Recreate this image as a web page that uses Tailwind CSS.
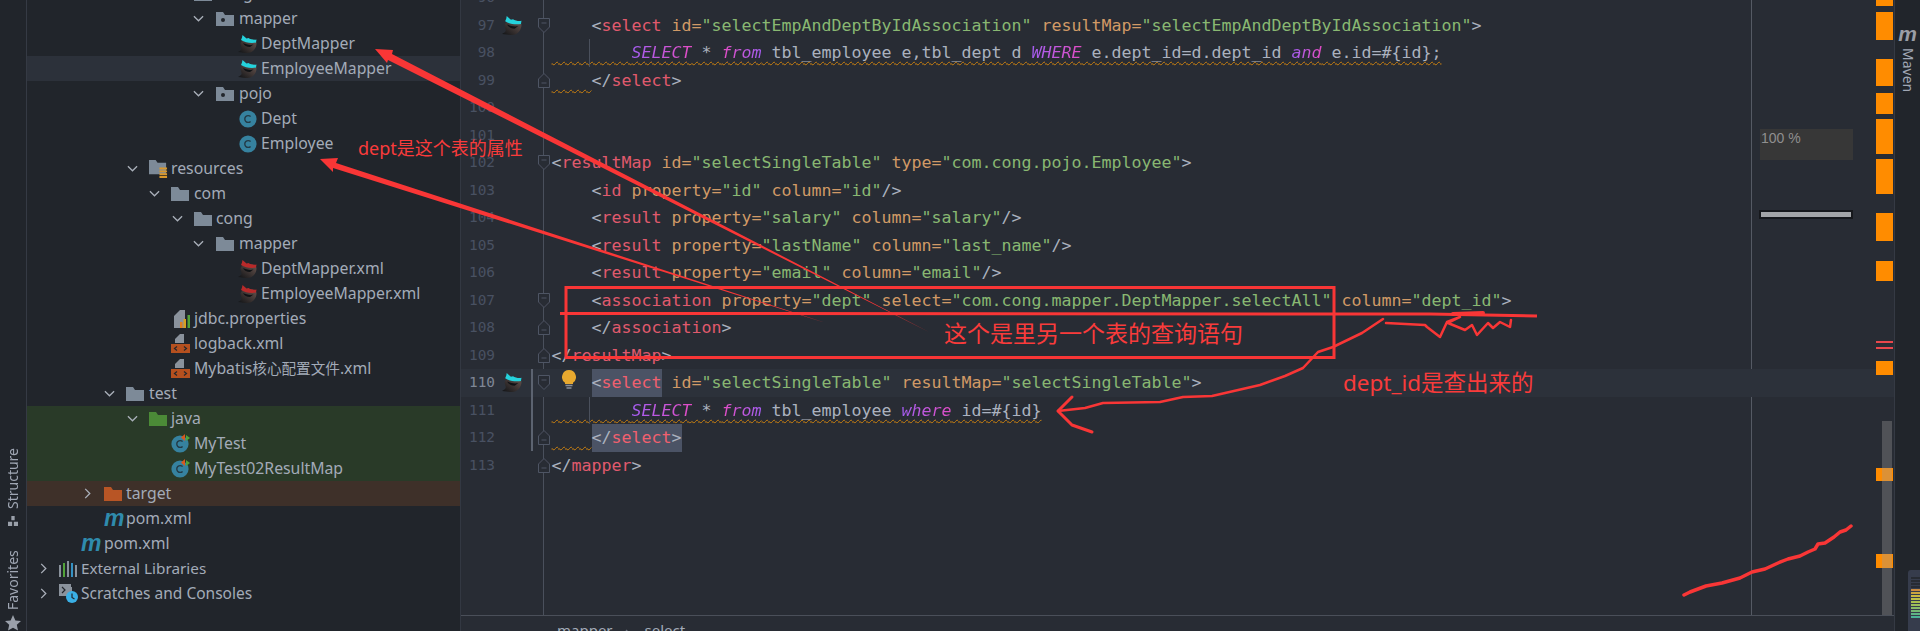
<!DOCTYPE html>
<html lang="zh">
  <head>
    <meta charset="UTF-8" />
    <meta name="viewport" content="width=device-width, initial-scale=1.0" />
    <script src="https://cdn.jsdelivr.net/npm/@tailwindcss/browser@4"></script>
    <title>IDE</title>
  </head>
  <body class="bg-[#282c34]">
    <!-- shared icons -->
    <svg class="absolute w-0 h-0">
      <defs>
        <linearGradient id="bird-body" x1="1" y1="0" x2="0" y2="1"><stop offset="0" stop-color="#6a5650" /><stop offset="1" stop-color="#0f1215" /></linearGradient>
      </defs>
      <symbol id="chev-down" viewBox="0 0 12 12"><path d="M1 3.500 6 8.500 11 3.500" fill="none" stroke="#aab0ba" stroke-width="1.400" /></symbol>
      <symbol id="chev-right" viewBox="0 0 12 12"><path d="M3.500 1 8.500 6 3.500 11" fill="none" stroke="#aab0ba" stroke-width="1.400" /></symbol>
      <symbol id="folder" viewBox="0 0 18 16"><path d="M0 1h7l2 3h9v11H0z" fill="#7d8a98" /></symbol>
      <symbol id="package" viewBox="0 0 18 16"><path d="M0 1h7l2 3h9v11H0z" fill="#7d8a98" /><circle cx="7" cy="9" r="2" fill="#22262c" /></symbol>
      <symbol id="resources" viewBox="0 0 20 20"><path d="M0 1h7l2 3h9v12H0z" fill="#7d8a98" /><path d="M11 9h8v2h-8zM11 12h8v2h-8zM11 15h8v2h-8zM11 18h8v2h-8z" fill="#d9982b" /></symbol>
      <symbol id="java-folder" viewBox="0 0 18 16"><path d="M0 1h7l2 3h9v11H0z" fill="#4b8a37" /></symbol>
      <symbol id="target-folder" viewBox="0 0 18 16"><path d="M0 1h7l2 3h9v11H0z" fill="#b85525" /></symbol>
      <symbol id="cls" viewBox="0 0 18 18"><circle cx="9" cy="9" r="8.600" fill="#36829f" /><path d="M11.600 6.600A3.400 3.400 0 1 0 11.600 11.400" fill="none" stroke="#233a46" stroke-width="1.400" /></symbol>
      <symbol id="test-cls" viewBox="0 0 19 19"><circle cx="9" cy="10" r="8.600" fill="#36829f" /><path d="M11.600 7.600A3.400 3.400 0 1 0 11.600 12.400" fill="none" stroke="#233a46" stroke-width="1.400" /><path d="M14 0 10 3.500 14 7z" fill="#d9591e" /><path d="M15 1 19 4 15 7z" fill="#52a339" /></symbol>
      <symbol id="bird-blue" viewBox="0 0 19 18"><path d="M2.500 9C3 5.500 6 4 10 4s8.500 1 8.500 4.500C18.500 13.500 14.500 18 9.500 18c-3 0-6-.5-9.500-1 2.500-1 4-2.500 3.500-4z" fill="url(#bird-body)" /><path d="M3 5c4 2.500 10 3.500 15 2.500l.5-3c-3 .5-6 0-8-1.500L8.500 3.500 4.500 0 4 2.500z" fill="#25d2dc" /><path d="M5 8c3 1.500 7 2.500 10.500 1.500L12 12c-3 0-6-1.500-7-4z" fill="#0f1215" /></symbol>
      <symbol id="bird-red" viewBox="0 0 19 18"><path d="M2.500 9C3 5.500 6 4 10 4s8.500 1 8.500 4.500C18.500 13.500 14.500 18 9.500 18c-3 0-6-.5-9.500-1 2.500-1 4-2.500 3.500-4z" fill="url(#bird-body)" /><path d="M3 5c4 2.500 10 3.500 15 2.500l.5-3c-3 .5-6 0-8-1.500L8.500 3.500 4.500 0 4 2.500z" fill="#b82a2a" /><path d="M5 8c3 1.500 7 2.500 10.500 1.500L12 12c-3 0-6-1.500-7-4z" fill="#0f1215" /></symbol>
      <symbol id="xml" viewBox="0 0 19 19"><path d="M4 9V5l5-5h4v9z" fill="#8a929c" /><path d="M0 10h19v9H0z" fill="#b5501f" /><path d="M6 12.500 3.500 14.500 6 16.500M13 12.500 15.500 14.500 13 16.500" fill="none" stroke="#22262c" stroke-width="1.200" /></symbol>
      <symbol id="props" viewBox="0 0 17 18"><path d="M0 18V6l6-6h5v18z" fill="#8a929c" /><path d="M6 12h2.500v6H6z" fill="#e0801f" /><path d="M9.500 9H12v9H9.500z" fill="#d9a020" /><path d="M13.500 5H16v13h-2.500z" fill="#52a339" /></symbol>
      <symbol id="fold-open" viewBox="0 0 12 15"><path d="M.5.5h11v8.500L6 14.500.5 9z" fill="#282c34" stroke="#4e5564" /><path d="M3.500 5h5" stroke="#4e5564" /></symbol>
      <symbol id="fold-close" viewBox="0 0 12 15"><path d="M.5 14.500h11V6L6 .5.5 6z" fill="#282c34" stroke="#4e5564" /><path d="M3.500 10h5" stroke="#4e5564" /></symbol>
    </svg>

    <div class="relative w-[1920px] h-[631px] overflow-hidden flex font-['Noto_Sans',sans-serif]">
      <!-- left tool stripe -->
      <div class="w-[27px] shrink-0 bg-[#21252b] border-r border-[#353a44] flex flex-col items-center pt-[451px] text-[14px] leading-none text-[#a0a7b4]">
        <span class="[writing-mode:vertical-rl] rotate-180 h-[58px] text-center">Structure</span>
        <svg class="w-[12px] h-[12px] mt-[7px] mb-[28px]" viewBox="0 0 12 12"><path d="M4 0h4v5H4zM0 7h5v5H0zM7 7h5v5H7z" fill="#9aa0aa" /></svg>
        <span class="[writing-mode:vertical-rl] rotate-180 h-[56px] text-center">Favorites</span>
        <svg class="w-[16px] h-[16px] mt-[5px] shrink-0" viewBox="0 0 16 16"><path d="M8 0l2.400 5.400 5.600.6-4.200 3.800 1.200 5.800L8 12.700 3 15.600l1.200-5.800L0 6l5.600-.6z" fill="#9aa0aa" /></svg>
      </div>

      <!-- project tree -->
      <div class="w-[434px] shrink-0 bg-[#21252b] border-r border-[#333842] -mt-[19px] text-[15.800px] text-[#a3abb8]">
        <div class="h-[25px] flex items-center pl-[145px]"><svg class="w-[11px] h-[11px] mr-[11px]"><use href="#chev-down" /></svg><svg class="w-[18px] h-[16px] mr-[4px]"><use href="#package" /></svg><span>cong</span></div>
        <div class="h-[25px] flex items-center pl-[166px]"><svg class="w-[11px] h-[11px] mr-[12px]"><use href="#chev-down" /></svg><svg class="w-[18px] h-[16px] mr-[5px]"><use href="#package" /></svg><span>mapper</span></div>
        <div class="h-[25px] flex items-center pl-[211px]"><svg class="w-[19px] h-[18px] mr-[4px]"><use href="#bird-blue" /></svg><span>DeptMapper</span></div>
        <div class="h-[25px] flex items-center pl-[211px] bg-[#2c313a]"><svg class="w-[19px] h-[18px] mr-[4px]"><use href="#bird-blue" /></svg><span>EmployeeMapper</span></div>
        <div class="h-[25px] flex items-center pl-[166px]"><svg class="w-[11px] h-[11px] mr-[12px]"><use href="#chev-down" /></svg><svg class="w-[18px] h-[16px] mr-[5px]"><use href="#package" /></svg><span>pojo</span></div>
        <div class="h-[25px] flex items-center pl-[212px]"><svg class="w-[18px] h-[18px] mr-[4px]"><use href="#cls" /></svg><span>Dept</span></div>
        <div class="h-[25px] flex items-center pl-[212px]"><svg class="w-[18px] h-[18px] mr-[4px]"><use href="#cls" /></svg><span>Employee</span></div>
        <div class="h-[25px] flex items-center pl-[100px]"><svg class="w-[11px] h-[11px] mr-[11px]"><use href="#chev-down" /></svg><svg class="w-[19px] h-[19px] mr-[3px]"><use href="#resources" /></svg><span>resources</span></div>
        <div class="h-[25px] flex items-center pl-[122px]"><svg class="w-[11px] h-[11px] mr-[11px]"><use href="#chev-down" /></svg><svg class="w-[18px] h-[16px] mr-[5px]"><use href="#folder" /></svg><span>com</span></div>
        <div class="h-[25px] flex items-center pl-[145px]"><svg class="w-[11px] h-[11px] mr-[11px]"><use href="#chev-down" /></svg><svg class="w-[18px] h-[16px] mr-[4px]"><use href="#folder" /></svg><span>cong</span></div>
        <div class="h-[25px] flex items-center pl-[166px]"><svg class="w-[11px] h-[11px] mr-[12px]"><use href="#chev-down" /></svg><svg class="w-[18px] h-[16px] mr-[5px]"><use href="#folder" /></svg><span>mapper</span></div>
        <div class="h-[25px] flex items-center pl-[211px]"><svg class="w-[19px] h-[18px] mr-[4px]"><use href="#bird-red" /></svg><span>DeptMapper.xml</span></div>
        <div class="h-[25px] flex items-center pl-[211px]"><svg class="w-[19px] h-[18px] mr-[4px]"><use href="#bird-red" /></svg><span>EmployeeMapper.xml</span></div>
        <div class="h-[25px] flex items-center pl-[147px]"><svg class="w-[17px] h-[18px] mr-[3px]"><use href="#props" /></svg><span>jdbc.properties</span></div>
        <div class="h-[25px] flex items-center pl-[144px]"><svg class="w-[19px] h-[19px] mr-[4px]"><use href="#xml" /></svg><span>logback.xml</span></div>
        <div class="h-[25px] flex items-center pl-[144px]"><svg class="w-[19px] h-[19px] mr-[4px]"><use href="#xml" /></svg><span>Mybatis<span class="text-[14.600px] font-['Noto_Sans_CJK_SC',sans-serif]">核心配置文件</span>.xml</span></div>
        <div class="h-[25px] flex items-center pl-[77px]"><svg class="w-[11px] h-[11px] mr-[11px]"><use href="#chev-down" /></svg><svg class="w-[18px] h-[16px] mr-[5px]"><use href="#folder" /></svg><span>test</span></div>
        <div class="h-[25px] flex items-center pl-[100px] bg-[#293a28]"><svg class="w-[11px] h-[11px] mr-[11px]"><use href="#chev-down" /></svg><svg class="w-[18px] h-[16px] mr-[4px]"><use href="#java-folder" /></svg><span>java</span></div>
        <div class="h-[25px] flex items-center pl-[144px] bg-[#293a28]"><svg class="w-[19px] h-[19px] mr-[4px]"><use href="#test-cls" /></svg><span>MyTest</span></div>
        <div class="h-[25px] flex items-center pl-[144px] bg-[#293a28]"><svg class="w-[19px] h-[19px] mr-[4px]"><use href="#test-cls" /></svg><span>MyTest02ResultMap</span></div>
        <div class="h-[25px] flex items-center pl-[55px] bg-[#3e3029]"><svg class="w-[11px] h-[11px] mr-[11px]"><use href="#chev-right" /></svg><svg class="w-[18px] h-[16px] mr-[4px]"><use href="#target-folder" /></svg><span>target</span></div>
        <div class="h-[25px] flex items-center pl-[77px]"><span class="w-[22px] text-[23px] leading-none font-bold italic text-[#2f8bad] font-['Liberation_Sans',sans-serif]">m</span><span>pom.xml</span></div>
        <div class="h-[25px] flex items-center pl-[54px]"><span class="w-[23px] text-[23px] leading-none font-bold italic text-[#2f8bad] font-['Liberation_Sans',sans-serif]">m</span><span>pom.xml</span></div>
        <div class="h-[25px] flex items-center pl-[11px]"><svg class="w-[11px] h-[11px] mr-[10px]"><use href="#chev-right" /></svg><svg class="w-[18px] h-[16px] mr-[4px]" viewBox="0 0 18 16"><path d="M0 4h2v12H0z" fill="#8a929c" /><path d="M4 2h2v14H4z" fill="#52a339" /><path d="M8 0h2v16H8z" fill="#8a929c" /><path d="M12 2h2v14h-2z" fill="#3592c4" /><path d="M16 4h2v12h-2z" fill="#8a929c" /></svg><span class="text-[15.300px]">External Libraries</span></div>
        <div class="h-[25px] flex items-center pl-[11px]"><svg class="w-[11px] h-[11px] mr-[10px]"><use href="#chev-right" /></svg><svg class="w-[19px] h-[19px] mr-[3px]" viewBox="0 0 19 19"><path d="M0 0h12v3h1v9H0z" fill="#8a929c" /><path d="M3 3 6 6 3 9" fill="none" stroke="#22262c" stroke-width="1.200" /><circle cx="13" cy="13" r="6" fill="#3ab0e6" /><path d="M13 9.500V13.500L15.500 15" fill="none" stroke="#22262c" stroke-width="1.200" /></svg><span class="text-[15.500px]">Scratches and Consoles</span></div>
      </div>

      <!-- editor -->
      <div class="relative flex-1 min-w-0 flex flex-col bg-[#282c34]">
        <div class="relative h-[616px] shrink-0 flex flex-col overflow-hidden border-b border-[#4a4f59] font-['DejaVu_Sans_Mono',monospace] text-[16.610px] leading-[27.500px] text-[#abb2bf] whitespace-pre">
          <div class="absolute left-[82px] top-0 bottom-0 w-px bg-[#4a505c]"></div>
          <div class="absolute left-[1290px] top-0 bottom-0 w-px bg-[#555a64]"></div>
          <div class="relative shrink-0 flex flex-col -mt-[16px]">
            <div class="h-[27.500px] flex"><span class="w-[34px] text-right text-[14.400px] text-[#495162]">96</span></div>

            <div class="relative h-[27.500px] flex items-center">
              <span class="w-[34px] text-right text-[14.400px] text-[#495162]">97</span>
              <svg class="w-[20px] h-[19px] ml-[7px] mr-[16px]"><use href="#bird-blue" /></svg>
              <svg class="w-[12px] h-[15px]"><use href="#fold-open" /></svg>
              <span class="ml-[1.500px]">    &lt;<span class="text-[#e05a6d]">select</span> <span class="text-[#d19a66]">id=</span><span class="text-[#89b872]">"selectEmpAndDeptByIdAssociation"</span> <span class="text-[#d19a66]">resultMap=</span><span class="text-[#89b872]">"selectEmpAndDeptByIdAssociation"</span>&gt;</span>
            </div>
            <div class="relative h-[27.500px] flex items-center">
              <span class="w-[34px] text-right text-[14.400px] text-[#495162]">98</span>
              <span class="ml-[56.500px] underline decoration-wavy decoration-1 decoration-[#c9800f] underline-offset-[3px] [text-decoration-skip-ink:none]">        <span class="italic text-transparent bg-clip-text bg-linear-to-r from-[#a45cf0] to-[#e24bc4]">SELECT</span> * <span class="italic text-transparent bg-clip-text bg-linear-to-r from-[#e24bc4] to-[#a45cf0]">from</span> tbl_employee e,tbl_dept d <span class="italic text-transparent bg-clip-text bg-linear-to-r from-[#a45cf0] to-[#e24bc4]">WHERE</span> e.dept_id=d.dept_id <span class="italic text-transparent bg-clip-text bg-linear-to-r from-[#a45cf0] to-[#e24bc4]">and</span> e.id=#{id};</span>
              <div class="absolute left-[128px] top-0 bottom-0 w-px bg-[#4a505c]"></div>
            </div>
            <div class="relative h-[27.500px] flex items-center">
              <span class="w-[34px] text-right text-[14.400px] text-[#495162]">99</span>
              <svg class="w-[12px] h-[15px] ml-[43px]"><use href="#fold-close" /></svg>
              <span class="ml-[1.500px]"><span class="underline decoration-wavy decoration-1 decoration-[#c9800f] underline-offset-[3px] [text-decoration-skip-ink:none]">    </span>&lt;/<span class="text-[#e05a6d]">select</span>&gt;</span>
            </div>
            <div class="h-[27.500px] flex items-center"><span class="w-[34px] text-right text-[14.400px] text-[#495162]">100</span></div>
            <div class="h-[27.500px] flex items-center"><span class="w-[34px] text-right text-[14.400px] text-[#495162]">101</span></div>
            <div class="h-[27.500px] flex items-center">
              <span class="w-[34px] text-right text-[14.400px] text-[#495162]">102</span>
              <svg class="w-[12px] h-[15px] ml-[43px]"><use href="#fold-open" /></svg>
              <span class="ml-[1.500px]">&lt;<span class="text-[#e05a6d]">resultMap</span> <span class="text-[#d19a66]">id=</span><span class="text-[#89b872]">"selectSingleTable"</span> <span class="text-[#d19a66]">type=</span><span class="text-[#89b872]">"com.cong.pojo.Employee"</span>&gt;</span>
            </div>
            <div class="h-[27.500px] flex items-center">
              <span class="w-[34px] text-right text-[14.400px] text-[#495162]">103</span>
              <span class="ml-[56.500px]">    &lt;<span class="text-[#e05a6d]">id</span> <span class="text-[#d19a66]">property=</span><span class="text-[#89b872]">"id"</span> <span class="text-[#d19a66]">column=</span><span class="text-[#89b872]">"id"</span>/&gt;</span>
            </div>
            <div class="h-[27.500px] flex items-center">
              <span class="w-[34px] text-right text-[14.400px] text-[#495162]">104</span>
              <span class="ml-[56.500px]">    &lt;<span class="text-[#e05a6d]">result</span> <span class="text-[#d19a66]">property=</span><span class="text-[#89b872]">"salary"</span> <span class="text-[#d19a66]">column=</span><span class="text-[#89b872]">"salary"</span>/&gt;</span>
            </div>
            <div class="h-[27.500px] flex items-center">
              <span class="w-[34px] text-right text-[14.400px] text-[#495162]">105</span>
              <span class="ml-[56.500px]">    &lt;<span class="text-[#e05a6d]">result</span> <span class="text-[#d19a66]">property=</span><span class="text-[#89b872]">"lastName"</span> <span class="text-[#d19a66]">column=</span><span class="text-[#89b872]">"last_name"</span>/&gt;</span>
            </div>
            <div class="h-[27.500px] flex items-center">
              <span class="w-[34px] text-right text-[14.400px] text-[#495162]">106</span>
              <span class="ml-[56.500px]">    &lt;<span class="text-[#e05a6d]">result</span> <span class="text-[#d19a66]">property=</span><span class="text-[#89b872]">"email"</span> <span class="text-[#d19a66]">column=</span><span class="text-[#89b872]">"email"</span>/&gt;</span>
            </div>
            <div class="h-[27.500px] flex items-center">
              <span class="w-[34px] text-right text-[14.400px] text-[#495162]">107</span>
              <svg class="w-[12px] h-[15px] ml-[43px]"><use href="#fold-open" /></svg>
              <span class="ml-[1.500px]">    &lt;<span class="text-[#e05a6d]">association</span> <span class="text-[#d19a66]">property=</span><span class="text-[#89b872]">"dept"</span> <span class="text-[#d19a66]">select=</span><span class="text-[#89b872]">"com.cong.mapper.DeptMapper.selectAll"</span> <span class="text-[#d19a66]">column=</span><span class="text-[#89b872]">"dept_id"</span>&gt;</span>
            </div>
            <div class="h-[27.500px] flex items-center">
              <span class="w-[34px] text-right text-[14.400px] text-[#495162]">108</span>
              <svg class="w-[12px] h-[15px] ml-[43px]"><use href="#fold-close" /></svg>
              <span class="ml-[1.500px]">    &lt;/<span class="text-[#e05a6d]">association</span>&gt;</span>
            </div>
            <div class="h-[27.500px] flex items-center">
              <span class="w-[34px] text-right text-[14.400px] text-[#495162]">109</span>
              <svg class="w-[12px] h-[15px] ml-[43px]"><use href="#fold-close" /></svg>
              <span class="ml-[1.500px]">&lt;/<span class="text-[#e05a6d]">resultMap</span>&gt;</span>
            </div>
            <div class="relative h-[27.500px] flex items-center bg-[#2c313a]">
              <span class="w-[34px] text-right text-[14.400px] text-[#7f8796]">110</span>
              <svg class="w-[20px] h-[19px] ml-[7px] mr-[16px]"><use href="#bird-blue" /></svg>
              <svg class="w-[12px] h-[15px]"><use href="#fold-open" /></svg>
              <span class="ml-[1.500px]">    <span class="inline-block h-[27.500px] bg-[#4b5365]">&lt;<span class="text-[#f0606f]">select</span></span> <span class="text-[#d19a66]">id=</span><span class="text-[#89b872]">"selectSingleTable"</span> <span class="text-[#d19a66]">resultMap=</span><span class="text-[#89b872]">"selectSingleTable"</span>&gt;</span>
            </div>
            <div class="relative h-[27.500px] flex items-center">
              <span class="w-[34px] text-right text-[14.400px] text-[#495162]">111</span>
              <span class="ml-[56.500px] underline decoration-wavy decoration-1 decoration-[#c9800f] underline-offset-[3px] [text-decoration-skip-ink:none]">        <span class="italic text-transparent bg-clip-text bg-linear-to-r from-[#a45cf0] to-[#e24bc4]">SELECT</span> * <span class="italic text-transparent bg-clip-text bg-linear-to-r from-[#e24bc4] to-[#a45cf0]">from</span> tbl_employee <span class="italic text-transparent bg-clip-text bg-linear-to-r from-[#a45cf0] to-[#e24bc4]">where</span> id=#{id}</span>
              <div class="absolute left-[128px] top-0 bottom-0 w-px bg-[#4a505c]"></div>
            </div>
            <div class="h-[27.500px] flex items-center">
              <span class="w-[34px] text-right text-[14.400px] text-[#495162]">112</span>
              <svg class="w-[12px] h-[15px] ml-[43px]"><use href="#fold-close" /></svg>
              <span class="ml-[1.500px]"><span class="underline decoration-wavy decoration-1 decoration-[#c9800f] underline-offset-[3px] [text-decoration-skip-ink:none]">    </span><span class="inline-block h-[27.500px] bg-[#4b5365]">&lt;/<span class="text-[#f0606f]">select</span>&gt;</span></span>
            </div>
            <div class="h-[27.500px] flex items-center">
              <span class="w-[34px] text-right text-[14.400px] text-[#495162]">113</span>
              <svg class="w-[12px] h-[15px] ml-[43px]"><use href="#fold-close" /></svg>
              <span class="ml-[1.500px]">&lt;/<span class="text-[#e05a6d]">mapper</span>&gt;</span>
            </div>
          </div>

          <!-- change marker and bulb -->
          <div class="absolute left-[70px] top-[369px] h-[82px] w-[2px] bg-[#5c6370]"></div>
          <svg class="absolute left-[101px] top-[370px] w-[14px] h-[19px]" viewBox="0 0 14 19"><path d="M7 0a7 7 0 0 1 4 12.700V14H3v-1.300A7 7 0 0 1 7 0z" fill="#e8a92f" /><path d="M3.500 15.500h7M4.500 18h5" stroke="#8a8f98" stroke-width="1.500" /></svg>

          <!-- hud -->
          <div class="absolute left-[1299px] top-[129px] w-[93px] h-[31px] bg-[#373737] px-[1px] text-[14px] leading-[18px] text-[#8f8f8f] font-['Liberation_Sans',sans-serif]">100 %</div>
          <div class="absolute left-[1298px] top-[210px] w-[94px] h-[9px] bg-[#a3a5a8] border-2 border-[#16181c]"></div>

          <!-- error stripe -->
          <div class="absolute left-[1415px] top-0 w-[17px] h-[616px]">
            <div class="absolute top-0 h-[6px] w-full bg-[#ff8c00]"></div>
            <div class="absolute top-[12px] h-[28px] w-full bg-[#ff8c00]"></div>
            <div class="absolute top-[59px] h-[27px] w-full bg-[#ff8c00]"></div>
            <div class="absolute top-[93px] h-[21px] w-full bg-[#ff8c00]"></div>
            <div class="absolute top-[119px] h-[35px] w-full bg-[#ff8c00]"></div>
            <div class="absolute top-[159px] h-[35px] w-full bg-[#ff8c00]"></div>
            <div class="absolute top-[213px] h-[28px] w-full bg-[#ff8c00]"></div>
            <div class="absolute top-[261px] h-[20px] w-full bg-[#ff8c00]"></div>
            <div class="absolute top-[341px] h-[2px] w-full bg-[#e9474c]"></div>
            <div class="absolute top-[347px] h-[2px] w-full bg-[#e9474c]"></div>
            <div class="absolute top-[361px] h-[14px] w-full bg-[#ff8c00]"></div>
            <div class="absolute top-[468px] h-[13px] w-full bg-[#ff8c00]"></div>
            <div class="absolute top-[554px] h-[14px] w-full bg-[#ff8c00]"></div>
            <div class="absolute left-[6px] top-[421px] w-[10px] h-[194px] bg-[#9a9a9a]/35"></div>
          </div>
        </div>

        <!-- breadcrumb, cut off by the window -->
        <div class="h-[15px] overflow-hidden flex items-start pl-[96px] pt-[5px] text-[15px] leading-[18px] text-[#a3abb8]"><span>mapper</span><svg class="w-[8px] h-[14px] mx-[12px] mt-[8px]" viewBox="0 0 8 14"><path d="M1 1 7 7 1 13" fill="none" stroke="#6a707c" stroke-width="1.400" /></svg><span>select</span></div>
      </div>

      <!-- right tool stripe -->
      <div class="relative w-[26px] shrink-0 bg-[#21252b] border-l border-[#353a44] flex flex-col items-center text-[14px] leading-none text-[#a0a7b4]">
        <span class="h-[6px] overflow-hidden [writing-mode:vertical-rl] -mt-[8px] text-[#a0a7b4]">t</span>
        <span class="mt-[28px] text-[21px] leading-[16px] font-bold italic text-[#9a9ea6] font-['Liberation_Sans',sans-serif]">m</span>
        <span class="mt-[6px] [writing-mode:vertical-rl]">Maven</span>
        <div class="absolute left-[13px] top-[570px] w-[14px] h-[62px] rounded-tl-[3px] bg-[#363c4c] pl-[3px] pt-[7px] flex flex-col gap-[1px]">
          <div class="h-[2px] bg-[#272b33]"></div>
          <div class="h-[2px] bg-[#272b33]"></div>
          <div class="h-[2px] bg-[#272b33]"></div>
          <div class="h-[2px] bg-[#272b33]"></div>
          <div class="h-[2px] bg-[#c98a3f]"></div>
          <div class="h-[2px] bg-[#c9a53f]"></div>
          <div class="h-[2px] bg-[#c9b83f]"></div>
          <div class="h-[2px] bg-[#bdc048]"></div>
          <div class="h-[2px] bg-[#a8c04d]"></div>
          <div class="h-[2px] bg-[#9cc05a]"></div>
          <div class="h-[2px] bg-[#88bd66]"></div>
          <div class="h-[2px] bg-[#74b874]"></div>
          <div class="h-[2px] bg-[#5fb585]"></div>
          <div class="h-[2px] bg-[#4bb296]"></div>
        </div>
      </div>

      <!-- red annotations drawn over the screenshot -->
      <svg class="absolute left-0 top-0 w-[1920px] h-[631px] pointer-events-none" viewBox="0 0 1920 631">
        <polygon points="375,49 393,50 392,54 929,332 388,60 387,63" fill="#f93636" />
        <polygon points="320,159 338,158 336,163 826,323 333,168 333,172" fill="#f93636" />
        <rect x="566" y="287.500" width="768" height="70" fill="none" stroke="#f93636" stroke-width="3" />
        <path d="M560 313.500 1430 314 1537 316" fill="none" stroke="#f93636" stroke-width="3" />
        <g fill="none" stroke="#f93636" stroke-linecap="round" stroke-linejoin="round">
          <path d="M1453 314 1483 313" stroke-width="4" />
          <path d="M1383 319 1362 333 1333 347 1318 352 1303 368 1285 376 1260 385 1212 396 1183 397 1160 402 1103 403 1085 408 1058 411" stroke-width="2.500" />
          <path d="M1072 397 1058 411 1072 425 1092 432" stroke-width="3" />
          <path d="M1386 323 1425 325 1427 327 1440 337 1447 322 1460 317 1448 323 1465 330 1472 325 1477 335 1488 323 1493 328 1500 322 1510 327 1511 320" stroke-width="2.500" />
          <path d="M1684 595 1690 592 1706 586 1722 583 1740 578 1752 572 1765 569 1778 563 1788 559 1800 556 1808 552 1815 549 1818 544 1825 543 1834 537 1840 532 1846 530 1851 526" stroke-width="3.500" />
        </g>
      </svg>
      <div class="absolute left-[358px] top-[135px] text-[18px] leading-[26px] text-[#f93b3b] font-['Noto_Sans','Noto_Sans_CJK_SC',sans-serif]">dept是这个表的属性</div>
      <div class="absolute left-[944px] top-[316px] text-[23px] leading-[32px] text-[#f93b3b] font-['Noto_Sans_CJK_SC',sans-serif]">这个是里另一个表的查询语句</div>
      <div class="absolute left-[1343px] top-[367px] text-[22.500px] leading-[32px] text-[#f93b3b] font-['Noto_Sans','Noto_Sans_CJK_SC',sans-serif]">dept_id是查出来的</div>
    </div>
  </body>
</html>
